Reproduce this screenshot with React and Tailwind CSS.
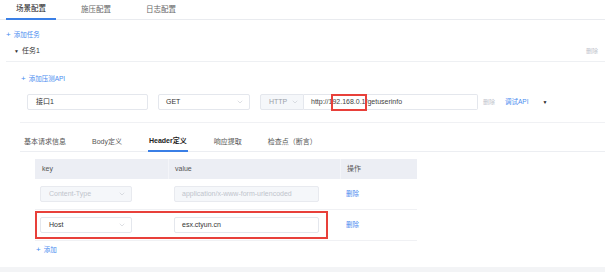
import { ChevronDown } from "lucide-react";

const Chevron = ({ className = "" }) => (
  <ChevronDown size={8} strokeWidth={1.4} className={`text-[#b8bcc4] ${className}`} />
);

const App = () => {
  return (
    <div className="w-[605px] h-[272px] bg-white overflow-hidden flex flex-col text-[7px] leading-[10px] text-[#444] font-['Liberation_Sans','Noto_Sans_CJK_SC',sans-serif]">
      {/* top tabs */}
      <div className="flex h-[20px] shrink-0 border-b border-[#e9ebef] pl-[6px] gap-[15px]">
        <div className="px-[10px] flex items-center border-b-2 border-[#3a7fe6] -mb-px text-[#222] text-[7.5px]">场景配置</div>
        <div className="px-[10px] flex items-center text-[#666] text-[7.5px]">施压配置</div>
        <div className="px-[10px] flex items-center text-[#666] text-[7.5px]">日志配置</div>
      </div>

      <div className="pl-[6px]">
        <div className="mt-[10px] h-[10px] flex items-center gap-[3px] text-[#4a8cf0] text-[6.5px]">
          <span className="text-[8px]">+</span>
          <span>添加任务</span>
        </div>

        <div className="h-[22px] flex items-center border-b border-[#eef0f3] pl-[8px] pr-[7px]">
          <span className="text-[5px] text-[#333] mr-[3px]">▼</span>
          <span className="text-[7px] text-[#333]">任务1</span>
          <span className="ml-auto text-[6px] text-[#c0c4cc]">删除</span>
        </div>
      </div>

      <div className="pl-[21px] mt-[12px] h-[10px] flex items-center gap-[3px] text-[#4a8cf0] text-[6.5px]">
        <span className="text-[8px]">+</span>
        <span>添加压测API</span>
      </div>

      {/* api row */}
      <div className="ml-[20px] mt-[10px] pb-[12px] border-b border-[#f0f1f4]">
        <div className="flex items-center pl-[7px] h-[16px]">
          <div className="w-[121px] h-[16px] border border-[#e4e7ed] rounded-[2px] flex items-center pl-[8px] text-[#333]">接口1</div>
          <div className="ml-[10px] w-[92px] h-[16px] border border-[#e4e7ed] rounded-[2px] flex items-center pl-[7px] pr-[5px] text-[#333]">
            GET
            <Chevron className="ml-auto" />
          </div>
          <div className="ml-[10px] w-[44px] h-[16px] border border-[#e4e7ed] bg-[#f5f7fa] rounded-l-[2px] flex items-center pl-[8px] pr-[4px] text-[#9aa0a8]">
            HTTP
            <Chevron className="ml-auto" />
          </div>
          <div className="relative w-[174px] h-[16px] border border-l-0 border-[#e4e7ed] rounded-r-[2px] flex items-center pl-[7px] text-[#444]">
            http://192.168.0.1/getuserinfo
            <div className="absolute left-[27px] -top-[1px] w-[36px] h-[17px] border-2 border-solid border-[#e8403a]" />
          </div>
          <span className="ml-[5px] text-[6px] text-[#c0c4cc]">删除</span>
          <span className="ml-[10px] text-[6.5px] text-[#4a8cf0]">调试API</span>
          <span className="ml-[14px] text-[5px] text-[#222]">▼</span>
        </div>
      </div>

      {/* sub tabs */}
      <div className="ml-[20px] mt-[9px] h-[20px] flex pl-[4px] gap-[26px] border-b border-[#eceef2]">
        <div className="flex items-center text-[#555]">基本请求信息</div>
        <div className="flex items-center text-[#555]">Body定义</div>
        <div className="flex items-center text-[#222] font-bold border-b-2 border-[#3a7fe6] -mb-px px-[1px]">Header定义</div>
        <div className="flex items-center text-[#555]">响应提取</div>
        <div className="flex items-center text-[#555]">检查点（断言）</div>
      </div>

      {/* header table */}
      <div className="ml-[35px] mt-[7px] w-[382px]">
        <div className="flex h-[20px] bg-[#eceef4] text-[#555]">
          <div className="w-[133px] flex items-center pl-[7px]">key</div>
          <div className="w-[172px] flex items-center pl-[6px] border-l border-[#f4f5f9]">value</div>
          <div className="flex-1 flex items-center pl-[6px] border-l border-[#f4f5f9]">操作</div>
        </div>

        <div className="flex h-[31px] items-center border-b border-[#f0f1f4]">
          <div className="w-[133px] pl-[5px]">
            <div className="w-[92px] h-[16px] border border-[#e8eaef] bg-[#f5f7fa] rounded-[2px] flex items-center pl-[8px] pr-[5px] text-[#c0c4cc]">
              Content-Type
              <Chevron className="ml-auto" />
            </div>
          </div>
          <div className="w-[172px] pl-[6px]">
            <div className="w-[145px] h-[16px] border border-[#e8eaef] bg-[#f5f7fa] rounded-[2px] flex items-center pl-[7px] text-[#c0c4cc]">
              application/x-www-form-urlencoded
            </div>
          </div>
          <div className="flex-1 pl-[6px] text-[6.5px] text-[#4a8cf0]">删除</div>
        </div>

        <div className="relative flex h-[31px] items-center border-b border-[#f0f1f4]">
          <div className="w-[133px] pl-[5px]">
            <div className="w-[92px] h-[16px] border border-[#e4e7ed] rounded-[2px] flex items-center pl-[8px] pr-[5px] text-[#333]">
              Host
              <Chevron className="ml-auto" />
            </div>
          </div>
          <div className="w-[172px] pl-[6px]">
            <div className="w-[145px] h-[16px] border border-[#e4e7ed] rounded-[2px] flex items-center pl-[7px] text-[#333]">
              esx.ctyun.cn
            </div>
          </div>
          <div className="flex-1 pl-[6px] text-[6.5px] text-[#4a8cf0]">删除</div>
          <div className="absolute left-0 top-[1px] w-[293px] h-[28px] border-2 border-solid border-[#e8403a]" />
        </div>

        <div className="mt-[4px] h-[10px] flex items-center gap-[3px] pl-[1px] text-[#4a8cf0] text-[6.5px]">
          <span className="text-[8px]">+</span>
          <span>添加</span>
        </div>
      </div>

      <div className="mt-auto h-[5px] bg-[#f3f4f6] shrink-0" />
    </div>
  );
};

export default App;
